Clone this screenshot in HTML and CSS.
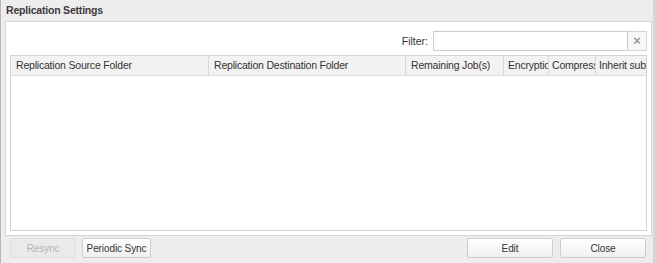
FILE: index.html
```html
<!DOCTYPE html>
<html>
<head>
<meta charset="utf-8">
<link rel="stylesheet" href="styles.css">
</head>
<body>
<div class="window">
  <div class="title">Replication Settings</div>
  <div class="panel">
    <div class="filter-row">
      <span class="filter-label">Filter:</span>
      <input class="filter-input" type="text">
      <span class="filter-clear">×</span>
    </div>
    <div class="grid">
      <div class="grid-head">
        <div class="col c1">Replication Source Folder</div>
        <div class="col c2">Replication Destination Folder</div>
        <div class="col c3">Remaining Job(s)</div>
        <div class="col c4">Encryption</div>
        <div class="col c5">Compress</div>
        <div class="col c6">Inherit subfolder</div>
      </div>
      <div class="grid-body"></div>
    </div>
  </div>
  <div class="footer">
    <div class="left">
      <button class="btn disabled resync">Resync</button>
      <button class="btn periodic">Periodic Sync</button>
    </div>
    <div class="right">
      <button class="btn wide">Edit</button>
      <button class="btn wide">Close</button>
    </div>
  </div>
</div>
</body>
</html>
```
FILE: styles.css
```css
html, body {
  margin: 0;
  padding: 0;
  background: #efecee;
}
body {
  width: 657px;
  height: 263px;
  overflow: hidden;
  font-family: "Liberation Sans", Arial, sans-serif;
  font-size: 10.5px;
  color: #333;
}
.window {
  box-sizing: border-box;
  width: 657px;
  height: 263px;
  border-left: 1px solid #b8b4b6;
  border-right: 4px solid #d7d4d6;
  background: #efecee;
  display: flex;
  flex-direction: column;
}
.title {
  height: 21px;
  padding-left: 5px;
  line-height: 20px;
  font-weight: bold;
  font-size: 10.5px;
  letter-spacing: -0.2px;
  color: #3a3a3a;
}
.panel {
  margin: 0 0 0 4px;
  width: 647px;
  height: 215px;
  box-sizing: border-box;
  background: #fff;
  border: 1px solid #d6d3d5;
  padding: 9px 4px 4px 4px;
  display: flex;
  flex-direction: column;
}
.filter-row {
  height: 20px;
  display: flex;
  justify-content: flex-end;
  align-items: center;
  margin-bottom: 4px;
}
.filter-label {
  margin-right: 5px;
  color: #333;
}
.filter-input {
  box-sizing: border-box;
  width: 195px;
  height: 20px;
  border: 1px solid #c9cbd3;
  margin: 0;
  padding: 0;
  background: #fff;
}
.filter-clear {
  box-sizing: border-box;
  width: 19px;
  height: 20px;
  border: 1px solid #d5d5d5;
  border-left: none;
  background: #f7f7f7;
  color: #999;
  font-size: 13px;
  font-weight: bold;
  text-align: center;
  line-height: 18px;
}
.grid {
  flex: 1;
  border: 1px solid #d3d3d3;
  display: flex;
  flex-direction: column;
}
.grid-head {
  display: flex;
  height: 19px;
  background: #f3f2f3;
  border-bottom: 1px solid #dcdcdc;
}
.col {
  box-sizing: border-box;
  height: 19px;
  line-height: 19px;
  padding-left: 5px;
  white-space: nowrap;
  overflow: hidden;
  text-overflow: clip;
  border-right: 1px solid #d8d8d8;
  color: #333;
  letter-spacing: -0.2px;
}
.c1 { width: 198px; }
.c2 { width: 197px; }
.c3 { width: 98px; }
.c4 { width: 45px; padding-left: 4px; }
.c5 { width: 47px; padding-left: 3px; }
.c6 { flex: 1; padding-left: 3px; border-right: none; }
.grid-body {
  flex: 1;
}
.footer {
  height: 27px;
  display: flex;
  justify-content: space-between;
  align-items: flex-start;
  padding: 2px 7px 0 9px;
  box-sizing: border-box;
}
.left, .right {
  display: flex;
  gap: 6px;
}
.right { gap: 7px; }
.btn {
  box-sizing: border-box;
  height: 20px;
  border: 1px solid #cfcccd;
  border-radius: 2px;
  background: linear-gradient(#fefefe, #f1f0f0);
  font-family: "Liberation Sans", Arial, sans-serif;
  font-size: 10px;
  letter-spacing: -0.1px;
  color: #333;
  padding: 0;
  white-space: nowrap;
}
.resync { width: 66px; }
.periodic { width: 69px; }
.wide { width: 86px; }
.btn.disabled {
  color: #b5b5b5;
  background: #ebe9ea;
  border-color: #dedcdd;
}
```
